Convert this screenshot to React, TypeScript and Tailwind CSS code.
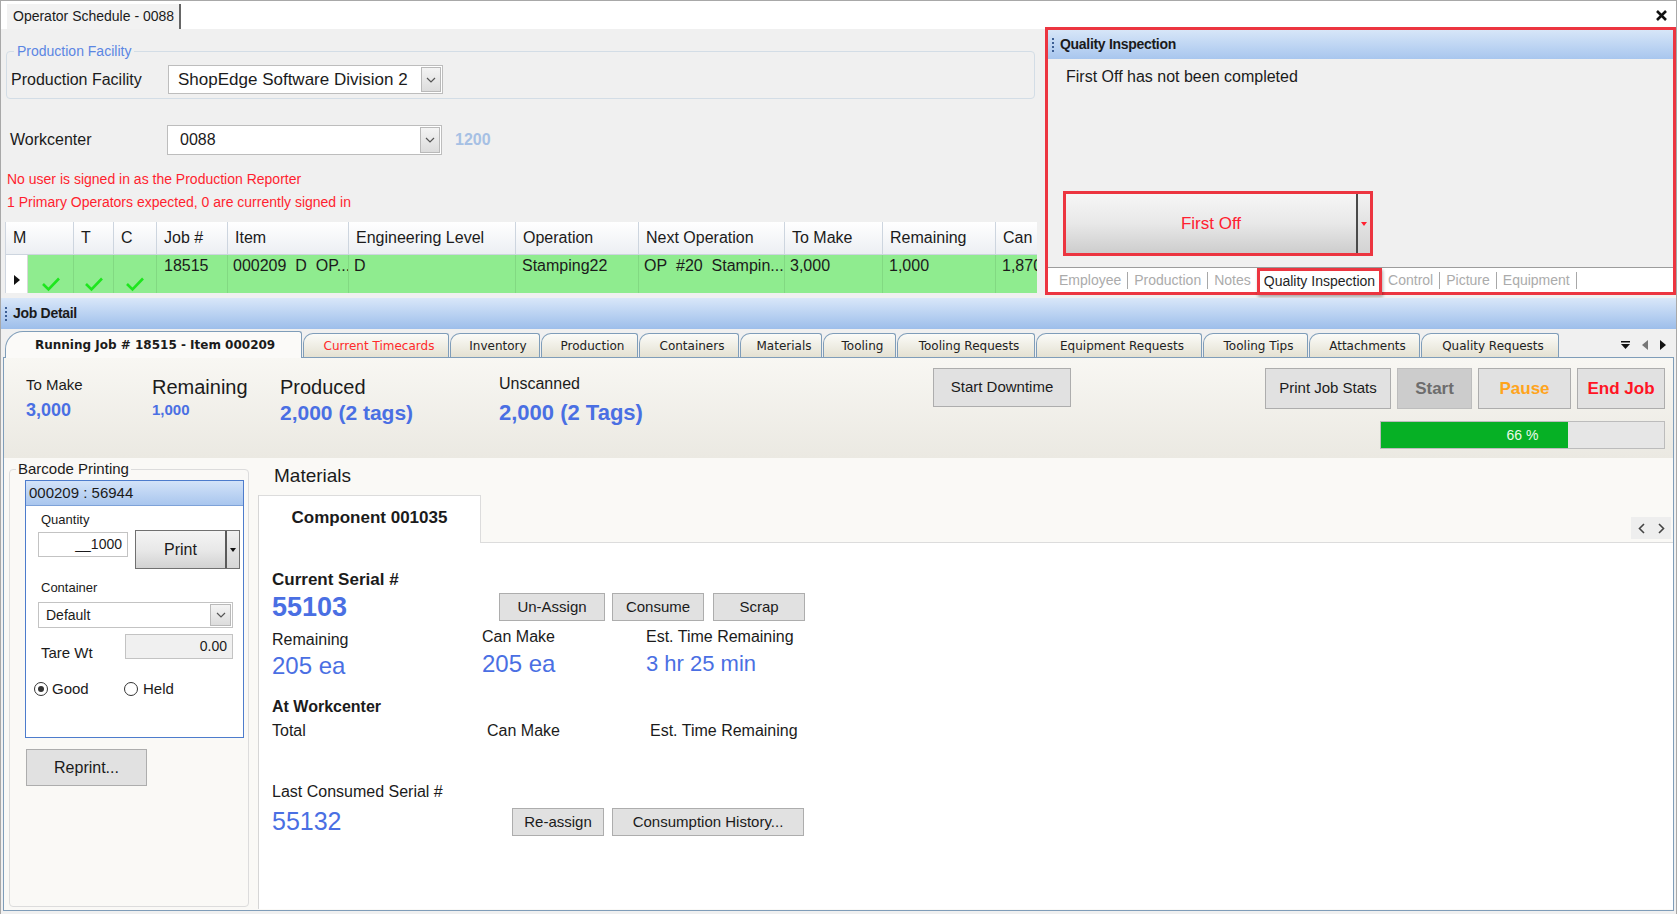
import React from "react"

function Grip() {
  return (
    <div className="flex flex-col gap-[2px] mr-[6px]">
      <span className="block w-[2px] h-[2px] bg-[#3d5f94]" />
      <span className="block w-[2px] h-[2px] bg-[#3d5f94]" />
      <span className="block w-[2px] h-[2px] bg-[#3d5f94]" />
      <span className="block w-[2px] h-[2px] bg-[#3d5f94]" />
    </div>
  )
}

function Check() {
  return (
    <svg width="20" height="16" viewBox="0 0 20 16">
      <path d="M2 8 L7.5 13.5 L18 2.5" fill="none" stroke="#1ee61e" strokeWidth="2.6" />
    </svg>
  )
}

function DropBtn({ className }: { className: string }) {
  return (
    <div className={"flex items-center justify-center border border-[#b9b9b9] bg-linear-to-b from-[#f4f4f4] to-[#dcdcdc] " + className}>
      <svg width="10" height="6" viewBox="0 0 10 6">
        <path d="M1 1 L5 5 L9 1" fill="none" stroke="#555" strokeWidth="1.2" />
      </svg>
    </div>
  )
}

const headCols = [
  { label: "M", w: "w-[68px]" },
  { label: "T", w: "w-[40px]" },
  { label: "C", w: "w-[43px]" },
  { label: "Job #", w: "w-[71px]" },
  { label: "Item", w: "w-[121px]" },
  { label: "Engineering Level", w: "w-[167px]" },
  { label: "Operation", w: "w-[123px]" },
  { label: "Next Operation", w: "w-[146px]" },
  { label: "To Make", w: "w-[98px]" },
  { label: "Remaining", w: "w-[113px]" },
  { label: "Can Make", w: "w-[42px]" },
]

function LeftTop() {
  return (
    <div className="flex-1 flex flex-col min-w-0">
      <fieldset className="ml-[5px] mr-[10px] mt-[14px] h-[56px] border border-[#d3dde6] rounded-[4px] px-[4px]">
        <legend className="ml-[3px] px-[3px] text-[14px] leading-[16px] text-[#5b86e3]">Production Facility</legend>
        <div className="flex items-center mt-[6px]">
          <div className="w-[157px] text-[16px]">Production Facility</div>
          <div className="w-[275px] h-[29px] bg-white border border-[#bdbdbd] flex items-center pl-[9px] pr-[1px]">
            <span className="flex-1 text-[17px]">ShopEdge Software Division 2</span>
            <DropBtn className="w-[20px] h-[25px]" />
          </div>
        </div>
      </fieldset>

      <div className="flex items-center mt-[26px] h-[30px] pl-[9px]">
        <div className="w-[157px] text-[16px]">Workcenter</div>
        <div className="w-[275px] h-[30px] bg-white border border-[#bdbdbd] flex items-center pl-[12px] pr-[1px]">
          <span className="flex-1 text-[16px]">0088</span>
          <DropBtn className="w-[20px] h-[26px]" />
        </div>
        <span className="ml-[13px] text-[16px] font-bold text-[#a6c0e4]">1200</span>
      </div>

      <div className="mt-[13px] pl-[6px] text-[14px] leading-[23px] text-[#ff1f2f]">
        <div>No user is signed in as the Production Reporter</div>
        <div>1 Primary Operators expected, 0 are currently signed in</div>
      </div>

      <div className="mt-[8px] ml-[4px] w-[1032px] overflow-hidden flex flex-col border-l border-[#cfd6e0]">
        <div className="flex h-[33px]">
          {headCols.map((c) => (
            <div
              key={c.label}
              className={c.w + " shrink-0 h-full flex items-center pl-[7px] text-[16px] whitespace-nowrap overflow-hidden bg-linear-to-b from-white to-[#eceff3] border-r border-b border-[#cdd5df]"}
            >
              {c.label}
            </div>
          ))}
        </div>
        <div className="flex h-[38px] text-[16px] leading-[22px]">
          <div className="w-[22px] shrink-0 bg-white flex items-end justify-center pb-[8px] border-r border-[#d8d8d8]">
            <svg width="6" height="10" viewBox="0 0 6 10"><path d="M0 0 L6 5 L0 10 Z" fill="#111" /></svg>
          </div>
          <div className="w-[46px] shrink-0 bg-[#8fec8f] border-r border-[#82d982] flex items-end justify-center pb-[1px]"><Check /></div>
          <div className="w-[40px] shrink-0 bg-[#8fec8f] border-r border-[#82d982] flex items-end justify-center pb-[1px]"><Check /></div>
          <div className="w-[43px] shrink-0 bg-[#8fec8f] border-r border-[#82d982] flex items-end justify-center pb-[1px]"><Check /></div>
          <div className="w-[71px] shrink-0 bg-[#8fec8f] border-r border-[#82d982] pl-[7px]">18515</div>
          <div className="w-[121px] shrink-0 bg-[#8fec8f] border-r border-[#82d982] pl-[5px] whitespace-nowrap overflow-hidden">000209&nbsp; D&nbsp; OP...</div>
          <div className="w-[167px] shrink-0 bg-[#8fec8f] border-r border-[#82d982] pl-[5px]">D</div>
          <div className="w-[123px] shrink-0 bg-[#8fec8f] border-r border-[#82d982] pl-[6px]">Stamping22</div>
          <div className="w-[146px] shrink-0 bg-[#8fec8f] border-r border-[#82d982] pl-[5px] whitespace-nowrap overflow-hidden">OP&nbsp; #20&nbsp; Stampin...</div>
          <div className="w-[98px] shrink-0 bg-[#8fec8f] border-r border-[#82d982] pl-[5px]">3,000</div>
          <div className="w-[113px] shrink-0 bg-[#8fec8f] border-r border-[#82d982] pl-[6px]">1,000</div>
          <div className="w-[42px] shrink-0 bg-[#8fec8f] pl-[6px] whitespace-nowrap overflow-hidden">1,870</div>
        </div>
      </div>
    </div>
  )
}

const qiTabs = ["Employee", "Production", "Notes", "Quality Inspection", "Control", "Picture", "Equipment"]

function QualityPanel() {
  return (
    <div className="w-[631px] h-[268px] -mt-[2px] shrink-0 border-[3px] border-[#ec3540] flex flex-col bg-[#f0f0f0]">
      <div className="h-[29px] shrink-0 bg-linear-to-b from-[#d7e6f8] to-[#a8c6ee] flex items-center pl-[4px]">
        <Grip />
        <span className="font-bold text-[14px] tracking-[-0.3px]">Quality Inspection</span>
      </div>
      <div className="flex-1 flex flex-col pl-[15px]">
        <div className="mt-[8px] ml-[3px] text-[16px] leading-[20px]">First Off has not been completed</div>
        <div className="mt-[104px] w-[310px] h-[65px] border-[3px] border-[#ec3540] flex">
          <div className="flex-1 flex items-center justify-center bg-linear-to-b from-[#f6f6f6] via-[#e8e8e8] to-[#cdcdcd] text-[17px] text-[#ff2030]">
            First Off
          </div>
          <div className="w-[2px] bg-[#4a4a4a]" />
          <div className="w-[12px] flex items-center justify-center bg-linear-to-b from-[#f2f2f2] to-[#d3d3d3]">
            <svg width="6" height="4" viewBox="0 0 6 4"><path d="M0 0 L6 0 L3 4 Z" fill="#ff2030" /></svg>
          </div>
        </div>
      </div>
      <div className="h-[25px] shrink-0 bg-white border-t border-[#9c9c9c] flex items-center pl-[5px] text-[14px] text-[#ababab]">
        {qiTabs.map((t, i) => (
          <React.Fragment key={t}>
            {t === "Quality Inspection" ? (
              <div className="h-[27px] -mb-[2px] px-[4px] flex items-center border-[3px] border-[#ec3540] text-[#1f1f1f] shadow-[1px_2px_3px_rgba(0,0,0,0.3)]">{t}</div>
            ) : (
              <span className="px-[6px]">{t}</span>
            )}
            {i < qiTabs.length - 1 && t !== "Notes" && t !== "Quality Inspection" && (
              <span className="w-px h-[17px] bg-[#a8a8a8]" />
            )}
            {i === qiTabs.length - 1 && <span className="w-px h-[17px] bg-[#a8a8a8]" />}
          </React.Fragment>
        ))}
      </div>
    </div>
  )
}

const jobTabs = [
  { t: "Current Timecards", w: "w-[146px]", red: true },
  { t: "Inventory", w: "w-[90px]" },
  { t: "Production", w: "w-[97px]" },
  { t: "Containers", w: "w-[100px]" },
  { t: "Materials", w: "w-[82px]" },
  { t: "Tooling", w: "w-[73px]" },
  { t: "Tooling Requests", w: "w-[138px]" },
  { t: "Equipment Requests", w: "w-[166px]" },
  { t: "Tooling Tips", w: "w-[105px]" },
  { t: "Attachments", w: "w-[111px]" },
  { t: "Quality Requests", w: "w-[138px]" },
]

function Btn({ className, children }: { className: string; children: React.ReactNode }) {
  return (
    <div className={"flex items-center justify-center border border-[#adadad] bg-[#e1e1e1] " + className}>{children}</div>
  )
}

function Stats() {
  return (
    <div className="h-[100px] shrink-0 flex bg-linear-to-b from-[#f8f7f3] to-[#ebe9e2] pl-[22px] pr-[8px]">
      <div className="w-[126px] flex flex-col">
        <div className="mt-[18px] text-[15px] leading-[18px]">To Make</div>
        <div className="mt-[5px] text-[18px] leading-[22px] font-bold text-[#4a6fe3]">3,000</div>
      </div>
      <div className="w-[128px] flex flex-col">
        <div className="mt-[17px] text-[20px] leading-[24px]">Remaining</div>
        <div className="mt-[1px] text-[15px] leading-[20px] font-bold text-[#4a6fe3]">1,000</div>
      </div>
      <div className="w-[219px] flex flex-col">
        <div className="mt-[17px] text-[20px] leading-[24px]">Produced</div>
        <div className="mt-[1px] text-[21px] leading-[26px] font-bold text-[#4a6fe3]">2,000 (2 tags)</div>
      </div>
      <div className="w-[434px] flex flex-col">
        <div className="mt-[16px] text-[16px] leading-[20px]">Unscanned</div>
        <div className="mt-[6px] text-[22px] leading-[26px] font-bold text-[#4a6fe3]">2,000 (2 Tags)</div>
      </div>
      <Btn className="mt-[10px] w-[138px] h-[39px] text-[15px]">Start Downtime</Btn>
      <div className="flex-1" />
      <div className="flex flex-col items-end">
        <div className="mt-[10px] flex gap-[6px]">
          <Btn className="w-[126px] h-[41px] text-[15px]">Print Job Stats</Btn>
          <div className="w-[75px] h-[41px] flex items-center justify-center border border-[#bdbdbd] bg-[#cccccc] text-[17px] font-bold text-[#6d6d6d]">Start</div>
          <Btn className="w-[93px] h-[41px] text-[17px] font-bold text-[#ffa41c]">Pause</Btn>
          <Btn className="w-[88px] h-[41px] text-[17px] font-bold text-[#ff1424]">End Job</Btn>
        </div>
        <div className="mt-[12px] w-[285px] h-[28px] border border-[#bcbcbc] bg-[#e6e6e6] flex relative">
          <div className="w-[66%] h-full bg-[#06b025]" />
          <div className="absolute inset-0 flex items-center justify-center text-[14px] text-[#e9fbe9]">66 %</div>
        </div>
      </div>
    </div>
  )
}

function Barcode() {
  return (
    <fieldset className="ml-[5px] mt-[3px] mb-[3px] w-[240px] border border-[#dcdcdc] rounded-[4px] pl-[4px] pr-[4px] flex flex-col">
      <legend className="ml-[2px] px-[2px] text-[15px] leading-[16px]">Barcode Printing</legend>
      <div className="mt-[3px] ml-[11px] h-[258px] border border-[#4d7ccc] bg-white flex flex-col">
        <div className="h-[25px] shrink-0 bg-linear-to-b from-[#d3e3f8] to-[#a9c6ee] flex items-center pl-[3px] text-[15px] border-b border-[#7ea2d8]">000209 : 56944</div>
        <div className="flex flex-col pl-[12px]">
          <div className="mt-[6px] ml-[3px] text-[13px] leading-[16px]">Quantity</div>
          <div className="mt-[2px] flex items-start">
            <div className="mt-[2px] w-[90px] h-[25px] border border-[#c3c3c3] bg-white flex items-center justify-end pr-[5px] text-[14px]">__1000</div>
            <div className="ml-[7px] w-[105px] h-[39px] border border-[#707070] flex">
              <div className="flex-1 flex items-center justify-center bg-linear-to-b from-[#f4f4f4] via-[#e9e9e9] to-[#d2d2d2] text-[16px]">Print</div>
              <div className="w-[2px] bg-[#5a5a5a]" />
              <div className="w-[12px] flex items-center justify-center bg-linear-to-b from-[#f0f0f0] to-[#d6d6d6]">
                <svg width="6" height="4" viewBox="0 0 6 4"><path d="M0 0 L6 0 L3 4 Z" fill="#111" /></svg>
              </div>
            </div>
          </div>
          <div className="mt-[11px] ml-[3px] text-[13px] leading-[16px]">Container</div>
          <div className="mt-[6px] w-[195px] h-[26px] border border-[#c3c3c3] bg-white flex items-center pl-[7px] pr-[1px]">
            <span className="flex-1 text-[14px]">Default</span>
            <DropBtn className="w-[21px] h-[22px]" />
          </div>
          <div className="mt-[6px] flex items-end">
            <span className="w-[87px] pl-[3px] text-[15px] leading-[18px] -mb-[3px]">Tare Wt</span>
            <div className="w-[108px] h-[25px] border border-[#c3c3c3] bg-[#f0f0f0] flex items-center justify-end pr-[5px] text-[14px]">0.00</div>
          </div>
          <div className="mt-[20px] h-[20px] flex items-center text-[15px] -ml-[4px]">
            <span className="w-[14px] h-[14px] rounded-full border border-[#333] flex items-center justify-center">
              <span className="w-[6px] h-[6px] rounded-full bg-[#333]" />
            </span>
            <span className="ml-[4px] w-[72px]">Good</span>
            <span className="w-[14px] h-[14px] rounded-full border border-[#333]" />
            <span className="ml-[5px]">Held</span>
          </div>
        </div>
      </div>
      <Btn className="mt-[11px] ml-[12px] w-[121px] h-[37px] text-[16px]">Reprint...</Btn>
    </fieldset>
  )
}

function Materials() {
  return (
    <div className="flex-1 flex flex-col ml-[9px] min-w-0">
      <div className="mt-[7px] ml-[16px] text-[19px] leading-[22px]">Materials</div>
      <div className="mt-[8px] flex-1 mb-[1px] flex flex-col border-l border-[#d6d6d6]">
        <div className="h-[48px] shrink-0 flex items-stretch border-b border-[#dcdcdc]">
          <div className="w-[222px] bg-white border-t border-r border-[#dcdcdc] -mb-px flex items-center justify-center pb-[4px] text-[17px] font-bold">Component 001035</div>
          <div className="flex-1" />
          <div className="self-end mb-[3px] mr-[2px] w-[40px] h-[22px] bg-[#eeeeee] flex items-center justify-around text-[#555]">
            <svg width="7" height="11" viewBox="0 0 7 11"><path d="M6 1 L1.5 5.5 L6 10" fill="none" stroke="#444" strokeWidth="1.6" /></svg>
            <svg width="7" height="11" viewBox="0 0 7 11"><path d="M1 1 L5.5 5.5 L1 10" fill="none" stroke="#444" strokeWidth="1.6" /></svg>
          </div>
        </div>
        <div className="flex-1 bg-white flex flex-col pl-[13px]">
          <div className="mt-[27px] text-[17px] leading-[20px] font-bold">Current Serial #</div>
          <div className="mt-[2px] flex items-start">
            <div className="w-[227px] text-[27px] leading-[30px] font-bold text-[#4a6fe3]">55103</div>
            <div className="mt-[1px] flex">
              <Btn className="w-[106px] h-[28px] text-[15px]">Un-Assign</Btn>
              <Btn className="ml-[7px] w-[92px] h-[28px] text-[15px]">Consume</Btn>
              <Btn className="ml-[9px] w-[92px] h-[28px] text-[15px]">Scrap</Btn>
            </div>
          </div>
          <div className="mt-[5px] flex">
            <div className="w-[210px] flex flex-col">
              <div className="mt-[3px] text-[16px] leading-[20px]">Remaining</div>
              <div className="mt-[2px] text-[24px] leading-[28px] text-[#4a6fe3]">205 ea</div>
            </div>
            <div className="w-[164px] flex flex-col">
              <div className="text-[16px] leading-[20px]">Can Make</div>
              <div className="mt-[3px] text-[24px] leading-[28px] text-[#4a6fe3]">205 ea</div>
            </div>
            <div className="flex flex-col">
              <div className="text-[16px] leading-[20px]">Est. Time Remaining</div>
              <div className="mt-[3px] text-[22px] leading-[28px] text-[#4a6fe3]">3 hr 25 min</div>
            </div>
          </div>
          <div className="mt-[17px] text-[16px] leading-[20px] font-bold">At Workcenter</div>
          <div className="mt-[4px] flex text-[16px] leading-[20px]">
            <div className="w-[215px]">Total</div>
            <div className="w-[163px]">Can Make</div>
            <div>Est. Time Remaining</div>
          </div>
          <div className="mt-[41px] text-[16px] leading-[20px]">Last Consumed Serial #</div>
          <div className="mt-[4px] flex items-start">
            <div className="w-[240px] text-[25px] leading-[30px] text-[#4a6fe3]">55132</div>
            <div className="mt-[2px] flex">
              <Btn className="w-[92px] h-[28px] text-[15px]">Re-assign</Btn>
              <Btn className="ml-[8px] w-[192px] h-[28px] text-[15px]">Consumption History...</Btn>
            </div>
          </div>
        </div>
      </div>
    </div>
  )
}

function JobDetail() {
  return (
    <div className="flex-1 flex flex-col min-h-0">
      <div className="h-[31px] shrink-0 bg-linear-to-b from-[#d9e7f9] to-[#9dbeea] flex items-center pl-[4px]">
        <Grip />
        <span className="font-bold text-[14px] tracking-[-0.3px]">Job Detail</span>
      </div>
      <div className="h-[28px] shrink-0 flex items-end pl-[4px] pr-[10px] font-['DejaVu_Sans',sans-serif] text-[12px]">
        <div className="w-[297px] h-[27px] -mb-px z-10 bg-[#fbfaf8] border-t border-l border-r border-[#7f9db9] rounded-tl-[18px] rounded-tr-[3px] flex items-center pl-[29px] font-bold">
          Running Job # 18515 - Item 000209
        </div>
        {jobTabs.map((j) => (
          <div
            key={j.t}
            className={j.w + " shrink-0 h-[24px] ml-[1px] border-t border-l border-r border-[#7f9db9] rounded-tl-[10px] rounded-tr-[3px] bg-linear-to-b from-[#fbfbf8] to-[#e4e1d2] flex items-center justify-center pl-[6px] " + (j.red ? "text-[#ff2a2a]" : "text-[#222]")}
          >
            {j.t}
          </div>
        ))}
        <div className="flex-1" />
        <div className="flex items-center gap-[12px] mb-[7px]">
          <svg width="9" height="8" viewBox="0 0 9 8"><rect x="0" y="0" width="9" height="1.5" fill="#111" /><path d="M0 3 L9 3 L4.5 8 Z" fill="#111" /></svg>
          <svg width="6" height="10" viewBox="0 0 6 10"><path d="M6 0 L0 5 L6 10 Z" fill="#777" /></svg>
          <svg width="6" height="10" viewBox="0 0 6 10"><path d="M0 0 L6 5 L0 10 Z" fill="#111" /></svg>
        </div>
      </div>
      <div className="flex-1 mx-[2px] mb-[3px] border border-[#7f9db9] flex flex-col bg-[#faf9f6] min-h-0">
        <Stats />
        <div className="flex-1 flex min-h-0">
          <Barcode />
          <Materials />
        </div>
      </div>
    </div>
  )
}

export default function App() {
  return (
    <div className="w-[1677px] h-[914px] flex flex-col overflow-hidden bg-[#f0f0f0] border-x border-t border-[#a8a8a8] font-['Liberation_Sans',Arial,sans-serif] text-[#1b1b1b]">
      <div className="h-[28px] shrink-0 bg-white flex items-end pl-[6px] pr-[9px]">
        <div className="h-[25px] bg-[#f2f2f2] flex items-center pl-[6px] pr-[5px] text-[14px] border-r-2 border-[#666]">
          Operator Schedule - 0088
        </div>
        <div className="flex-1" />
        <svg className="self-center mt-[1px]" width="11" height="11" viewBox="0 0 11 11">
          <path d="M1 1 L10 10 M10 1 L1 10" stroke="#111" strokeWidth="2.6" />
        </svg>
      </div>
      <div className="flex h-[269px] shrink-0">
        <LeftTop />
        <QualityPanel />
      </div>
      <JobDetail />
    </div>
  )
}
